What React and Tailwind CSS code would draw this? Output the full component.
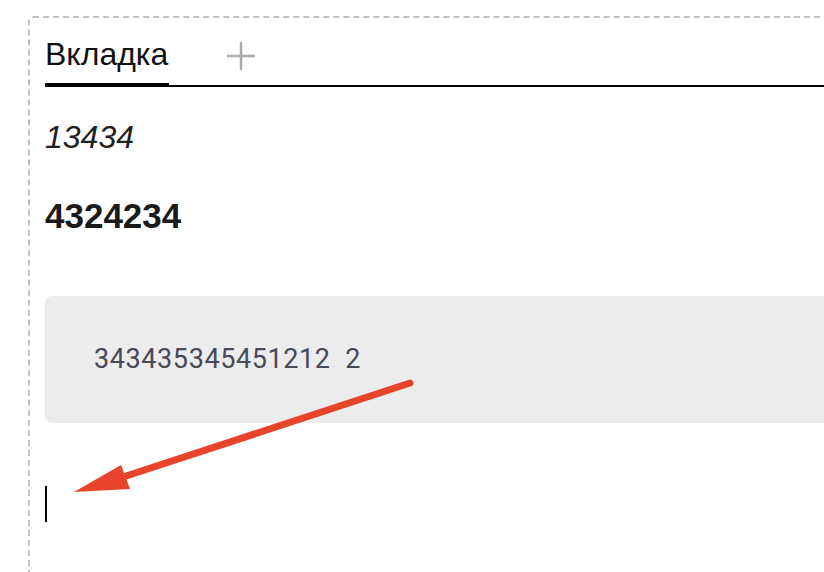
import React from "react";

const PlusIcon = () => (
	<svg width="28" height="28" viewBox="0 0 28 28" fill="none">
		<path d="M14 0v28M0 14h28" stroke="#ababab" strokeWidth="2.4" />
	</svg>
);

const Arrow = () => (
	<svg
		className="absolute left-0 top-0 pointer-events-none"
		width="824"
		height="572"
		viewBox="0 0 824 572"
	>
		<line
			x1="410"
			y1="383"
			x2="120"
			y2="478"
			stroke="#e8442b"
			strokeWidth="7"
			strokeLinecap="round"
		/>
		<polygon points="74,492 121,465 130,489" fill="#e8442b" />
	</svg>
);

const App = () => {
	return (
		<div
			className="relative w-[824px] h-[572px] overflow-hidden bg-white pt-[16px] pl-[28px]"
			style={{ fontFamily: '"Liberation Sans", Arial, sans-serif' }}
		>
			<div className="w-[900px] h-[700px] border-2 border-dashed border-[#c0c0c0] rounded-[5px] pl-[15px] pt-[17px]">
				{/* tabs */}
				<div className="flex items-end border-b-2 border-black">
					<div className="w-[124px] -mb-[2px] pb-[10px] border-b-4 border-black text-[32px] leading-[38px] text-[#111]">
						Вкладка
					</div>
					<div className="ml-[58px] mb-[15px]">
						<PlusIcon />
					</div>
				</div>

				<p className="mt-[30px] italic text-[32px] leading-[40px] text-[#222]">
					13434
				</p>
				<p className="mt-[39px] font-bold text-[35px] leading-[40px] text-[#1a1a1a]">
					4324234
				</p>

				<div className="mt-[60px] h-[127px] flex items-center bg-[#ececec] rounded-[7px] pl-[49px]">
					<span
						className="whitespace-pre text-[27px] tracking-[0.6px] text-[#484858]"
						style={{ fontFamily: "Roboto, sans-serif" }}
					>
						343435345451212  2
					</span>
				</div>

				<div className="mt-[63px] w-[2px] h-[36px] bg-black" />
			</div>
			<Arrow />
		</div>
	);
};

export default App;
